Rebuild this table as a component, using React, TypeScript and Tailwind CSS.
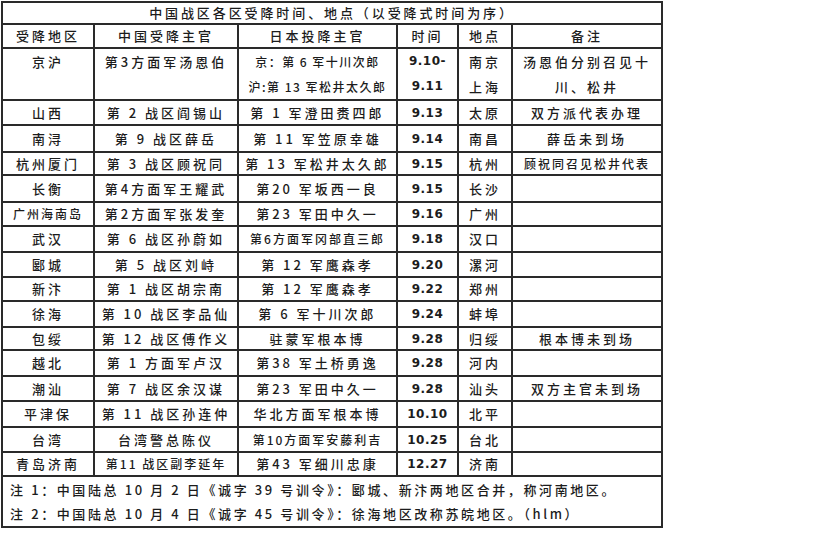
import React from 'react'

type Row = {
  area: string
  cn: string
  jp: React.ReactNode
  date: React.ReactNode
  place: React.ReactNode
  note?: React.ReactNode
  h: string
  small?: { area?: boolean; cn?: boolean; jp?: boolean; note?: boolean }
}

const rows: Row[] = [
  {
    area: '京沪',
    cn: '第3方面军汤恩伯',
    jp: (
      <>
        <div className="leading-[25px] text-[12px] tracking-[1.5px]">京：第 6 军十川次郎</div>
        <div className="leading-[25px] text-[12px] tracking-[1.5px]">沪:第 13 军松井太久郎</div>
      </>
    ),
    date: (
      <>
        <div className="leading-[25px]">9.10-</div>
        <div className="leading-[25px]">9.11</div>
      </>
    ),
    place: (
      <>
        <div className="leading-[25px]">南京</div>
        <div className="leading-[25px]">上海</div>
      </>
    ),
    note: (
      <>
        <div className="leading-[25px]">汤恩伯分别召见十</div>
        <div className="leading-[25px]">川、松井</div>
      </>
    ),
    h: 'h-[49px]',
  },
  { area: '山西', cn: '第 2 战区阎锡山', jp: '第 1 军澄田赉四郎', date: '9.13', place: '太原', note: '双方派代表办理', h: 'h-[25px]' },
  { area: '南浔', cn: '第 9 战区薛岳', jp: '第 11 军笠原幸雄', date: '9.14', place: '南昌', note: '薛岳未到场', h: 'h-[27px]' },
  { area: '杭州厦门', cn: '第 3 战区顾祝同', jp: '第 13 军松井太久郎', date: '9.15', place: '杭州', note: '顾祝同召见松井代表', h: 'h-[23px]', small: { note: true } },
  { area: '长衡', cn: '第4方面军王耀武', jp: '第20 军坂西一良', date: '9.15', place: '长沙', h: 'h-[27px]' },
  { area: '广州海南岛', cn: '第2方面军张发奎', jp: '第23 军田中久一', date: '9.16', place: '广州', h: 'h-[24px]', small: { area: true } },
  { area: '武汉', cn: '第 6 战区孙蔚如', jp: '第6方面军冈部直三郎', date: '9.18', place: '汉口', h: 'h-[26px]', small: { jp: true } },
  { area: '郾城', cn: '第 5 战区刘峙', jp: '第 12 军鹰森孝', date: '9.20', place: '漯河', h: 'h-[25px]' },
  { area: '新汴', cn: '第 1 战区胡宗南', jp: '第 12 军鹰森孝', date: '9.22', place: '郑州', h: 'h-[24px]' },
  { area: '徐海', cn: '第 10 战区李品仙', jp: '第 6 军十川次郎', date: '9.24', place: '蚌埠', h: 'h-[26px]' },
  { area: '包绥', cn: '第 12 战区傅作义', jp: '驻蒙军根本博', date: '9.28', place: '归绥', note: '根本博未到场', h: 'h-[23px]' },
  { area: '越北', cn: '第 1 方面军卢汉', jp: '第38 军土桥勇逸', date: '9.28', place: '河内', h: 'h-[26px]' },
  { area: '潮汕', cn: '第 7 战区余汉谋', jp: '第23 军田中久一', date: '9.28', place: '汕头', note: '双方主官未到场', h: 'h-[25px]' },
  { area: '平津保', cn: '第 11 战区孙连仲', jp: '华北方面军根本博', date: '10.10', place: '北平', h: 'h-[26px]' },
  { area: '台湾', cn: '台湾警总陈仪', jp: '第10方面军安藤利吉', date: '10.25', place: '台北', h: 'h-[25px]', small: { jp: true } },
  { area: '青岛济南', cn: '第11 战区副李延年', jp: '第43 军细川忠康', date: '12.27', place: '济南', h: 'h-[24px]', small: { cn: true } },
]

const td = 'border-2 border-[#2a2a2a] text-center p-0 whitespace-nowrap leading-[18px] overflow-hidden'
const big = 'text-[13px] tracking-[3px]'
const sm = 'text-[12px] tracking-[2px]'

export default function App() {
  return (
    <div className="w-[823px] h-[551px] bg-white pl-px pt-px text-[#1c1c1c] font-medium [font-family:'Noto_Sans_CJK_SC',sans-serif]">
      <table className="table-fixed border-collapse w-[660px]">
        <colgroup>
          <col className="w-[92px]" />
          <col className="w-[144px]" />
          <col className="w-[159px]" />
          <col className="w-[61px]" />
          <col className="w-[54px]" />
          <col className="w-[150px]" />
        </colgroup>
        <tbody>
          <tr className="h-[22px]">
            <td colSpan={6} className={`${td} text-[13px] tracking-[2.9px] align-middle`}>
              中国战区各区受降时间、地点（以受降式时间为序）
            </td>
          </tr>
          <tr className="h-[24px]">
            {['受降地区', '中国受降主官', '日本投降主官', '时间', '地点', '备注'].map(h => (
              <td key={h} className={`${td} ${big} align-middle`}>
                {h}
              </td>
            ))}
          </tr>
          {rows.map(r => {
            const first = r.h === 'h-[49px]'
            const v = first ? 'align-top' : 'align-middle'
            return (
              <tr key={r.area} className={r.h}>
                <td className={`${td} ${r.small?.area ? sm : big} ${v} ${first ? 'pt-[4px]' : ''}`}>{r.area}</td>
                <td className={`${td} ${r.small?.cn ? sm : big} ${v} ${first ? 'pt-[4px]' : ''}`}>{r.cn}</td>
                <td className={`${td} ${r.small?.jp ? sm : big} ${v}`}>{r.jp}</td>
                <td className={`${td} text-[12px] font-bold tracking-[0.5px] [font-family:'DejaVu_Sans',sans-serif] ${v}`}>{r.date}</td>
                <td className={`${td} ${big} ${v}`}>{r.place}</td>
                <td className={`${td} ${r.small?.note ? sm : big} ${v}`}>{r.note}</td>
              </tr>
            )
          })}
          <tr className="h-[51px]">
            <td colSpan={6} className={`${td} text-left align-middle px-[7px] text-[13px] tracking-[2.6px]`}>
              <div className="leading-[24px]">注 1：中国陆总 10 月 2 日《诚字 39 号训令》：郾城、新汴两地区合并，称河南地区。</div>
              <div className="leading-[24px]">注 2：中国陆总 10 月 4 日《诚字 45 号训令》：徐海地区改称苏皖地区。（hlm）</div>
            </td>
          </tr>
        </tbody>
      </table>
    </div>
  )
}
